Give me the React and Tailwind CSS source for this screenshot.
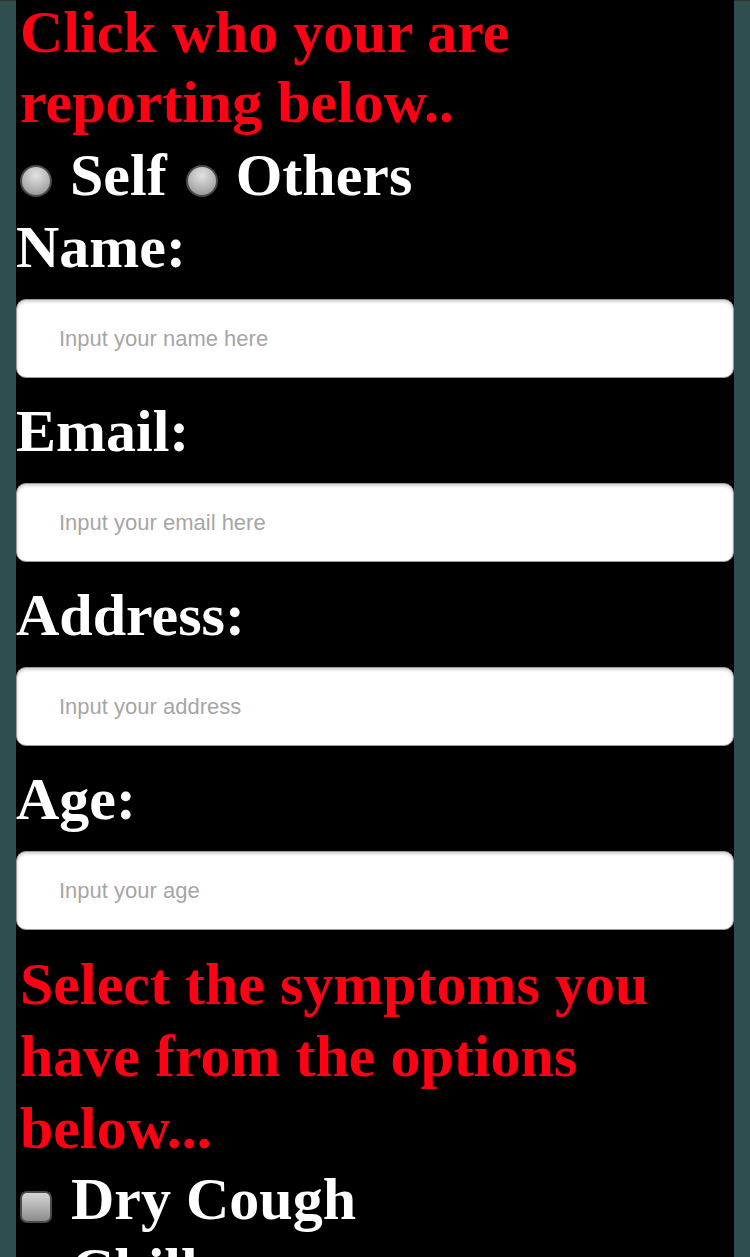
import React from 'react';

const serif = "font-['Liberation_Serif','Times_New_Roman',serif]";

function Radio({ className }) {
  return (
    <span
      className={
        'inline-block w-8 h-8 rounded-full border-2 border-[#4a4a4a] bg-[radial-gradient(circle_at_50%_30%,#e2e2e2_0%,#b4b4b4_55%,#8a8a8a_100%)] align-[-2px] ' +
        className
      }
    />
  );
}

function Checkbox({ className }) {
  return (
    <span
      className={
        'inline-block w-8 h-8 rounded-[7px] border-2 border-[#4a4a4a] bg-[linear-gradient(#d6d6d6,#8c8c8c)] align-[-4px] ' +
        className
      }
    />
  );
}

function Field({ label, placeholder, first }) {
  return (
    <div className={first ? 'mt-[2px]' : ''}>
      <div className="text-white font-bold text-[60px] leading-[70px]">{label}</div>
      <input
        type="text"
        placeholder={placeholder}
        className="block w-full h-[79px] mt-[17px] mb-[18px] bg-white rounded-[10px] border border-[#9c9c9c] shadow-[inset_0_2px_3px_rgba(0,0,0,0.18)] pl-[42px] text-[22px] font-['Liberation_Sans',Arial,sans-serif] text-black placeholder:text-[#a6a6a6] outline-none"
      />
    </div>
  );
}

export default function App() {
  let symptoms = ['Dry Cough', 'Chills', 'Fever', 'Sore Throat', 'Headache'];
  return (
    <div className="min-h-screen bg-[#2f4f4f] border-t border-[#333]">
      <div className={'mx-4 bg-black pb-10 ' + serif}>
        <h1 className="pl-1 mt-[-4px] text-[#ff0015] font-bold text-[60px] leading-[70px]">
          Click who your are reporting below..
        </h1>
        <div className="mt-[3px] text-white font-bold text-[60px] leading-[70px]">
          <Radio className="ml-1 mr-[18px]" />
          Self
          <Radio className="ml-[19px] mr-[18px]" />
          Others
        </div>
        <Field first label="Name:" placeholder="Input your name here" />
        <Field label="Email:" placeholder="Input your email here" />
        <Field label="Address:" placeholder="Input your address" />
        <Field label="Age:" placeholder="Input your age" />
        <h2 className="pl-1 text-[#ff0015] font-bold text-[60px] leading-[72px]">
          Select the symptoms you have from the options below...
        </h2>
        {symptoms.map((s, key) => (
          <div key={key} className="text-white font-bold text-[60px] leading-[70px]">
            <Checkbox className="ml-1 mr-[19px]" />
            {s}
          </div>
        ))}
      </div>
    </div>
  );
}
